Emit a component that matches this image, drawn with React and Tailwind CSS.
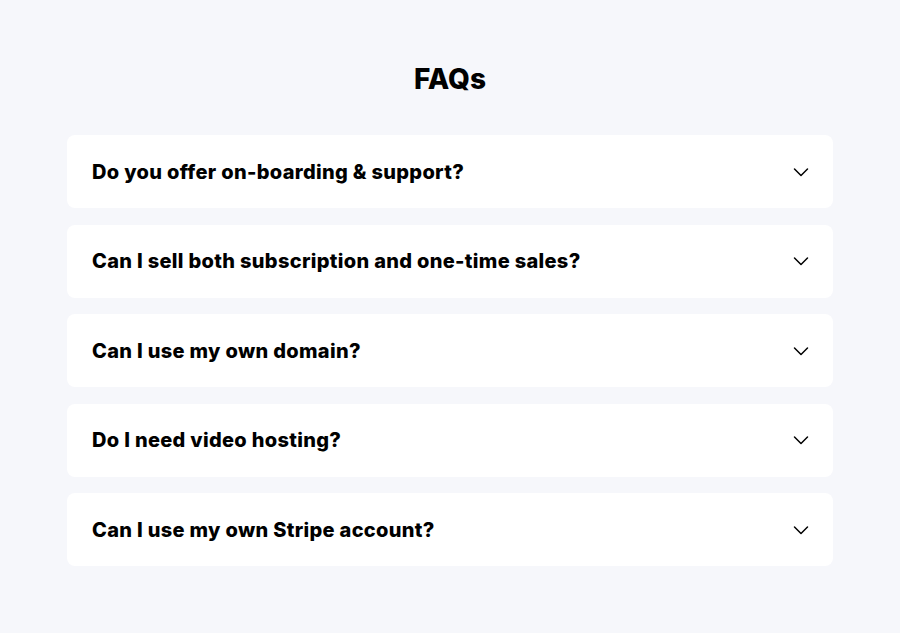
import React from 'react';

const faqs = [
    'Do you offer on-boarding & support?',
    'Can I sell both subscription and one-time sales?',
    'Can I use my own domain?',
    'Do I need video hosting?',
    'Can I use my own Stripe account?',
];

export default function App() {
    return (
        <div className="min-h-[633px] bg-[#f6f7fb] font-['Inter',sans-serif] text-black">
            <div className="pt-[61px] px-[67px]">
                <h2 className="text-center text-[28px] leading-[36px] font-extrabold">FAQs</h2>

                {/* Lista de preguntas */}
                <div className="mt-[38px] flex flex-col gap-[16.5px]">
                    {faqs.map((q, idx) => (
                        <div
                            key={idx}
                            className="h-[73px] bg-white rounded-[8px] px-[25px] flex items-center justify-between"
                        >
                            <span className="text-[20px] leading-[28px] font-extrabold tracking-[0.32px]">{q}</span>
                            <svg className="w-[16px] h-[16px] mr-[-1px]" fill="none" stroke="currentColor" viewBox="0 0 16 16">
                                <path strokeLinecap="round" strokeLinejoin="round" strokeWidth={1.5} d="M1.5 5l6.5 6.5L14.5 5" />
                            </svg>
                        </div>
                    ))}
                </div>
            </div>
        </div>
    );
}
